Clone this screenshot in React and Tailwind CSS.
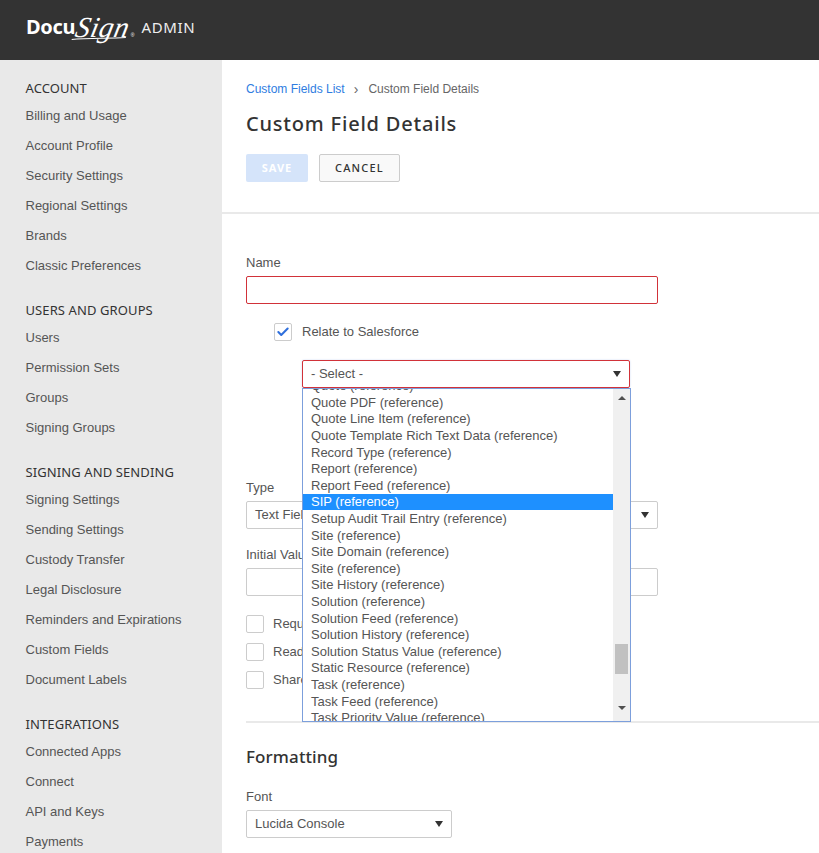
import { FiCheck } from "react-icons/fi";

const sideNav = [
  {
    title: "ACCOUNT",
    items: ["Billing and Usage", "Account Profile", "Security Settings", "Regional Settings", "Brands", "Classic Preferences"],
  },
  {
    title: "USERS AND GROUPS",
    items: ["Users", "Permission Sets", "Groups", "Signing Groups"],
  },
  {
    title: "SIGNING AND SENDING",
    items: [
      "Signing Settings",
      "Sending Settings",
      "Custody Transfer",
      "Legal Disclosure",
      "Reminders and Expirations",
      "Custom Fields",
      "Document Labels",
    ],
  },
  {
    title: "INTEGRATIONS",
    items: ["Connected Apps", "Connect", "API and Keys", "Payments"],
  },
];

const options = [
  "Quote (reference)",
  "Quote PDF (reference)",
  "Quote Line Item (reference)",
  "Quote Template Rich Text Data (reference)",
  "Record Type (reference)",
  "Report (reference)",
  "Report Feed (reference)",
  "SIP (reference)",
  "Setup Audit Trail Entry (reference)",
  "Site (reference)",
  "Site Domain (reference)",
  "Site (reference)",
  "Site History (reference)",
  "Solution (reference)",
  "Solution Feed (reference)",
  "Solution History (reference)",
  "Solution Status Value (reference)",
  "Static Resource (reference)",
  "Task (reference)",
  "Task Feed (reference)",
  "Task Priority Value (reference)",
];

const Caret = () => <span className="h-0 w-0 border-x-[4.5px] border-t-[6px] border-x-transparent border-t-[#333]" />;

const SelectBox = ({ label, className }) => (
  <div className={`flex h-7 items-center justify-between rounded-[2px] border border-[#ccc] bg-white pl-2 pr-[8px] text-[#555] ${className}`}>
    <span>{label}</span>
    <Caret />
  </div>
);

const Box = ({ className = "", children }) => (
  <span className={`flex h-[18px] w-[18px] shrink-0 items-center justify-center rounded-[2px] border border-[#ccc] bg-white ${className}`}>
    {children}
  </span>
);

const Logo = () => (
  <div className="flex items-center pb-[6px]">
    <span className="text-[20px] font-bold tracking-[-0.3px] [font-family:'Noto_Sans',sans-serif]">Docu</span>
    <span className="relative ml-[1px] -skew-x-12 text-[29px] italic leading-none tracking-[0.5px] [font-family:'Liberation_Serif',serif]">
      Sign
      {/* swash under the script part */}
      <svg className="absolute left-[-2px] top-[23px] h-[5px] w-[55px]" viewBox="0 0 55 5" fill="none">
        <path d="M0 3.5C16 2 36 2.5 54 1.5" stroke="white" strokeWidth="1" />
      </svg>
    </span>
    <span className="ml-[1px] mt-[18px] text-[5px]">®</span>
    <span className="ml-[7px] text-[15px] tracking-[0.6px] text-[#eee] [font-family:'Noto_Sans',sans-serif]">ADMIN</span>
  </div>
);

const Sidebar = () => (
  <aside className="w-[222px] shrink-0 bg-[#e9e9e9] pl-[25.5px] pt-[17px]">
    {sideNav.map((section) => (
      <div key={section.title} className="mb-[18px]">
        <div className="flex h-6 items-center text-[13px] tracking-[0.1px] text-[#333] [font-family:'Noto_Sans','Open_Sans',sans-serif]">
          {section.title}
        </div>
        {section.items.map((item) => (
          <div key={item} className="flex h-[30px] items-center text-[#555]">
            {item}
          </div>
        ))}
      </div>
    ))}
  </aside>
);

const Dropdown = () => (
  <div className="absolute left-[80px] top-[146px] w-[329px]">
    <div className="flex h-7 w-[328px] items-center justify-between rounded-[2px] border border-[#d13239] bg-white pl-2 pr-[8px] text-[#555] shadow-[0_0_2px_#c5d5f2]">
      <span>- Select -</span>
      <Caret />
    </div>
    {/* open list, the scrollbar is drawn so it looks like the old windows one */}
    <div className="flex h-[334px] border border-[#7c9fdc] bg-white">
      <div className="h-full flex-1 overflow-hidden">
        <div className="-mt-[11.5px]">
          {options.map((opt) => (
            <div
              key={opt}
              className={`flex h-[16.62px] items-center pl-2 ${opt.startsWith("SIP") ? "bg-[#1e90ff] text-white" : "text-[#555]"}`}
            >
              {opt}
            </div>
          ))}
        </div>
      </div>
      <div className="flex w-[17px] flex-col items-center bg-[#f0f0f0]">
        <span className="mt-[7px] h-0 w-0 border-x-[4px] border-b-[4px] border-x-transparent border-b-[#505050]" />
        <span className="mt-[244px] h-[30px] w-[13px] bg-[#c1c1c1]" />
        <span className="mt-[32px] h-0 w-0 border-x-[4px] border-t-[4px] border-x-transparent border-t-[#505050]" />
      </div>
    </div>
  </div>
);

export default function App() {
  return (
    <div className="flex h-screen flex-col overflow-hidden bg-white text-[13px] [font-family:'Liberation_Sans',Arial,sans-serif]">
      <header className="flex h-[60px] shrink-0 items-center bg-[#333] pl-[26px] text-white">
        <Logo />
      </header>

      <div className="flex min-h-0 flex-1">
        <Sidebar />

        <main className="min-w-0 flex-1">
          <div className="h-[154px] border-b-2 border-[#e9e9e9] pl-6 pt-[21px]">
            <div className="flex h-[16px] items-center text-[12px]">
              <span className="text-[#2f7de1]">Custom Fields List</span>
              <span className="ml-[9px] mr-[10px] text-[14px] leading-none text-[#666]">›</span>
              <span className="text-[#666]">Custom Field Details</span>
            </div>
            <h1 className="mt-[13px] text-[20px] font-medium leading-[28px] tracking-[0.8px] text-[#333] [font-family:'Noto_Sans',sans-serif]">
              Custom Field Details
            </h1>
            <div className="mt-4 flex gap-[11px] [font-family:'Noto_Sans',sans-serif]">
              <button className="h-7 w-[62px] rounded-[2px] bg-[#d5e4fa] text-[11px] font-bold tracking-[1px] text-white">SAVE</button>
              <button className="h-7 w-[81px] rounded-[2px] border border-[#ccc] bg-[#f9f9f9] text-[11px] font-medium tracking-[1.2px] text-[#333]">
                CANCEL
              </button>
            </div>
          </div>

          <div className="relative pl-6 pt-[41px]">
            <label className="flex h-4 items-center text-[#555]">Name</label>
            <div className="mt-[5px] h-7 w-[412px] rounded-[2px] border border-[#d13239] bg-white" />

            <div className="ml-[28px] mt-[19px] flex h-[18px] items-center gap-[10px] text-[#555]">
              <Box>
                <FiCheck className="text-[14px] text-[#2f6fdc]" strokeWidth={3.5} />
              </Box>
              Relate to Salesforce
            </div>

            <label className="mt-[139px] flex h-4 items-center text-[#555]">Type</label>
            <SelectBox label="Text Field" className="mt-[5px] w-[412px]" />

            <label className="mt-[18px] flex h-4 items-center text-[#555]">Initial Value</label>
            <div className="mt-[5px] h-7 w-[412px] rounded-[2px] border border-[#ccc] bg-white" />

            <div className="mt-[19px] flex flex-col gap-[10px] text-[#555]">
              {["Required", "Read Only", "Shared"].map((opt) => (
                <div key={opt} className="flex h-[18px] items-center gap-[9px]">
                  <Box />
                  {opt}
                </div>
              ))}
            </div>

            <div className="mt-[32px] h-[2px] bg-[#e9e9e9]" />

            <h2 className="mt-[22px] text-[17px] font-medium leading-6 tracking-[0.1px] text-[#333] [font-family:'Noto_Sans',sans-serif]">
              Formatting
            </h2>
            <label className="mt-[20px] flex h-4 items-center text-[#555]">Font</label>
            <SelectBox label="Lucida Console" className="mt-[5px] w-[206px]" />

            <Dropdown />
          </div>
        </main>
      </div>
    </div>
  );
}
